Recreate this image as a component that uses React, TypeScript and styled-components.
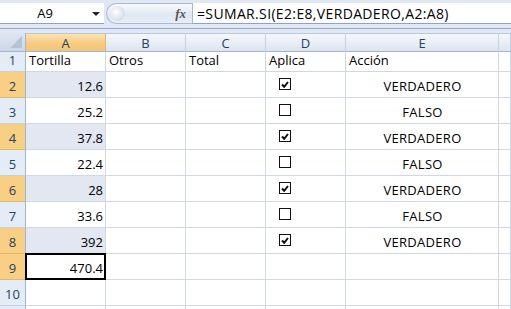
import React from "react";
import styled, { createGlobalStyle } from "styled-components";

const GlobalStyle = createGlobalStyle`
    html, body {
        margin: 0;
        padding: 0;
        background: #fff;
        overflow: hidden;
    }
    body {
        font-family: "Open Sans", "Liberation Sans", sans-serif;
    }
`;

const Window = styled.div`
    width: 511px;
    height: 309px;
    overflow: hidden;
    background: #fff;
`;

/* formula bar */
const FormulaBar = styled.div`
    display: flex;
    height: 29px;
    box-sizing: border-box;
    padding-top: 3px;
    background: #dfe8f4;
    border-bottom: 1px solid #9aaec8;
`;

const NameBox = styled.div`
    position: relative;
    width: 104px;
    height: 21px;
    background: #fff;
    border-bottom: 1px solid #8ea3bf;
    display: flex;
    align-items: center;
    justify-content: center;
    font-size: 13px;
    color: #000;
    box-sizing: border-box;
    padding-right: 14px;
`;

const DropArrow = styled.span`
    position: absolute;
    right: 4px;
    top: 9px;
    width: 0;
    height: 0;
    border-left: 4px solid transparent;
    border-right: 4px solid transparent;
    border-top: 4px solid #222;
`;

const FxPill = styled.div`
    position: relative;
    width: 86px;
    height: 21px;
    box-sizing: border-box;
    margin-left: 2px;
    border-radius: 11px 0 0 11px;
    border: 1px solid #a9b9d0;
    border-right: none;
    background: linear-gradient(#f7fafe, #dfe7f2 60%, #e9eff7);
    display: flex;
    align-items: center;
    justify-content: flex-end;
    padding-right: 6px;
`;

const Knob = styled.span`
    position: absolute;
    left: 3px;
    top: 2px;
    width: 15px;
    height: 15px;
    border-radius: 50%;
    background: radial-gradient(circle at 40% 40%, #fff, #d6dde8 70%, #b6c2d3);
`;

const Fx = styled.span`
    font-family: "Liberation Serif", serif;
    font-style: italic;
    font-weight: bold;
    font-size: 13px;
    color: #555;
`;

const FormulaText = styled.div`
    flex: 1;
    height: 21px;
    background: #fff;
    border-left: 1px solid #a9b9d0;
    border-bottom: 1px solid #8ea3bf;
    box-sizing: border-box;
    display: flex;
    align-items: center;
    padding-left: 4px;
    font-size: 14px;
    letter-spacing: 0.35px;
    color: #000;
    white-space: nowrap;
`;

/* sheet grid */
const Sheet = styled.div`
    display: grid;
    grid-template-columns: 26px 80px 80px 80px 80px 153px 12px;
    grid-template-rows: 19px 20px repeat(10, 26px);
    border-top: 4px solid #dfe8f4;
`;

const Corner = styled.div`
    position: relative;
    background: linear-gradient(#dfe6f0, #cdd7e6);
    border-right: 1px solid #9eb6ce;
    border-bottom: 1px solid #9eb6ce;
    box-sizing: border-box;
    &::after {
        content: "";
        position: absolute;
        right: 3px;
        bottom: 3px;
        width: 0;
        height: 0;
        border-left: 12px solid transparent;
        border-bottom: 12px solid #b5c3d7;
    }
`;

const ColHead = styled.div<{ $sel?: boolean }>`
    box-sizing: border-box;
    border-right: 1px solid ${p => (p.$sel ? "#e0b868" : "#c5d1e2")};
    border-bottom: 1px solid #9eb6ce;
    border-top: 1px solid #b8c8dc;
    background: ${p =>
        p.$sel
            ? "linear-gradient(#fbe3b4, #f6cc83 55%, #f4c474)"
            : "linear-gradient(#f5f7fb, #e8edf5 55%, #dde4ef)"};
    display: flex;
    align-items: center;
    justify-content: center;
    font-size: 13px;
    color: #27415f;
`;

const RowHead = styled.div<{ $sel?: boolean }>`
    box-sizing: border-box;
    border-right: 1px solid #9eb6ce;
    border-bottom: 1px solid ${p => (p.$sel ? "#e0b868" : "#c5d1e2")};
    background: ${p => (p.$sel ? "#f8cf85" : "#e4ecf7")};
    display: flex;
    align-items: flex-end;
    justify-content: center;
    padding-bottom: 2px;
    font-size: 13px;
    color: #27415f;
`;

const Cell = styled.div<{ $align?: "left" | "right" | "center"; $hl?: boolean; $active?: boolean }>`
    position: relative;
    box-sizing: border-box;
    border-right: 1px solid #d0d7e5;
    border-bottom: 1px solid #d0d7e5;
    background: ${p => (p.$hl ? "#e2e7f1" : "#fff")};
    display: flex;
    align-items: flex-end;
    justify-content: ${p =>
        p.$align === "right" ? "flex-end" : p.$align === "center" ? "center" : "flex-start"};
    padding: 0 2px 2px 3px;
    font-size: 13px;
    color: #000;
    white-space: nowrap;
    ${p =>
        p.$active &&
        `&::after {
            content: "";
            position: absolute;
            left: -1px;
            top: -1px;
            right: -1px;
            bottom: -1px;
            border: 2px solid #000;
        }`}
`;

const Wide = styled.span`
    letter-spacing: 0.3px;
`;

const CheckBox = styled.span`
    width: 12px;
    height: 12px;
    box-sizing: border-box;
    border: 1.5px solid #111;
    background: #fff;
    margin: 0 0 5px 10px;
    display: flex;
    align-items: center;
    justify-content: center;
`;

type RowData = { a: string; aplica: boolean };

const rows: RowData[] = [
    { a: "12.6", aplica: true },
    { a: "25.2", aplica: false },
    { a: "37.8", aplica: true },
    { a: "22.4", aplica: false },
    { a: "28", aplica: true },
    { a: "33.6", aplica: false },
    { a: "392", aplica: true },
];

const Check = () => (
    <svg width="8" height="7" viewBox="0 0 8 7">
        <path d="M1 3.5 L3.2 5.8 L7 1" fill="none" stroke="#111" strokeWidth="2" />
    </svg>
);

const App: React.FC = () => {
    const cols = ["A", "B", "C", "D", "E", ""];

    return (
        <Window>
            <GlobalStyle />
            <FormulaBar>
                <NameBox>
                    A9
                    <DropArrow />
                </NameBox>
                <FxPill>
                    <Knob />
                    <Fx>fx</Fx>
                </FxPill>
                <FormulaText>=SUMAR.SI(E2:E8,VERDADERO,A2:A8)</FormulaText>
            </FormulaBar>
            <Sheet>
                <Corner />
                {cols.map((c, i) => (
                    <ColHead key={i} $sel={c === "A"}>{c}</ColHead>
                ))}

                <RowHead>1</RowHead>
                <Cell>Tortilla</Cell>
                <Cell>Otros</Cell>
                <Cell>Total</Cell>
                <Cell>Aplica</Cell>
                <Cell>Acción</Cell>
                <Cell />

                {rows.map((r, i) => {
                    const sel = i % 2 === 0;
                    return (
                        <React.Fragment key={i}>
                            <RowHead $sel={sel}>{i + 2}</RowHead>
                            <Cell $align="right" $hl={sel}>{r.a}</Cell>
                            <Cell />
                            <Cell />
                            <Cell>
                                <CheckBox>{r.aplica && <Check />}</CheckBox>
                            </Cell>
                            <Cell $align="center">
                                <Wide>{r.aplica ? "VERDADERO" : "FALSO"}</Wide>
                            </Cell>
                            <Cell />
                        </React.Fragment>
                    );
                })}

                <RowHead $sel>9</RowHead>
                <Cell $align="right" $active>470.4</Cell>
                <Cell />
                <Cell />
                <Cell />
                <Cell />
                <Cell />

                <RowHead>10</RowHead>
                {cols.map((_, i) => <Cell key={i} />)}

                <RowHead />
                {cols.map((_, i) => <Cell key={i} />)}
            </Sheet>
        </Window>
    );
};

export default App;
